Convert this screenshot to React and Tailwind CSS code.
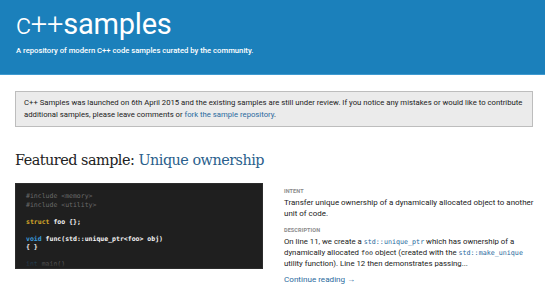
import React from "react";

const mono = { fontFamily: '"DejaVu Sans Mono", "Liberation Mono", monospace' };

export default function App() {
  return (
    <div className="w-[545px] h-[298px] overflow-hidden bg-white font-['Roboto',sans-serif] text-[#222]">
      <header className="h-[75px] bg-[#1b80bb] border-b border-[#3f9ad0] px-[16px] pt-[6px] text-white">
        <div className="flex items-baseline text-[29px] leading-[36px] tracking-[-0.2px]">
          <span className="font-light">c++</span>
          <span className="font-normal">samples</span>
        </div>
        <div className="mt-[4px] text-[7.7px] leading-[10px] font-medium">
          A repository of modern C++ code samples curated by the community.
        </div>
      </header>
      <main className="px-[15px]">
        <div className="mt-[16px] w-[518px] h-[36px] border border-[#bdbdbd] bg-[#ebebeb] px-[8px] py-[5px] text-[7.72px] leading-[12px] text-[#222]">
          C++ Samples was launched on 6th April 2015 and the existing samples are still under review. If you notice any mistakes or would like to contribute additional samples, please leave comments or{" "}
          <span className="text-[#2a6a9e]">fork the sample repository</span>.
        </div>
        <h1 className="mt-[23px] h-[20px] text-[14.4px] leading-[20px] font-['DejaVu_Serif',serif] tracking-[-0.5px] text-[#222]">
          Featured sample: <span className="text-[#2b5f8c]">Unique ownership</span>
        </h1>
        <div className="mt-[13px] flex gap-[21px]">
          <div className="relative w-[248px] h-[86px] shrink-0 overflow-hidden bg-[#1f1f1f] border border-[#2c2c2c] pl-[10px] pt-[8px] text-[6.5px] leading-[8.5px] text-[#f2f2f2]" style={mono}>
            <div className="text-[#6b6b6b]">#include &lt;memory&gt;</div>
            <div className="text-[#6b6b6b]">#include &lt;utility&gt;</div>
            <div>&nbsp;</div>
            <div className="font-bold"><span className="text-[#d6a82a]">struct</span> foo {"{};"}</div>
            <div>&nbsp;</div>
            <div className="font-bold"><span className="text-[#3a9bdc]">void</span> func(std::unique_ptr&lt;foo&gt; obj)</div>
            <div className="font-bold">{"{ }"}</div>
            <div>&nbsp;</div>
            <div><span className="text-[#3a9bdc]">int</span> main()</div>
            <div className="pointer-events-none absolute left-0 right-0 bottom-0 h-[20px] bg-gradient-to-b from-[#1f1f1f00] to-[#1f1f1f]" />
          </div>
          <div className="flex-1 min-w-0 pt-[4px]">
            <div className="text-[5.5px] leading-[8px] font-bold text-[#8a8a8a] tracking-[0.1px]">INTENT</div>
            <div className="mt-[3px] text-[7.95px] leading-[10.7px] text-[#222] whitespace-nowrap">
              Transfer unique ownership of a dynamically allocated object to another
              <br />
              unit of code.
            </div>
            <div className="mt-[7px] text-[5.5px] leading-[8px] font-bold text-[#8a8a8a] tracking-[0.1px]">DESCRIPTION</div>
            <div className="mt-[3px] text-[7.8px] leading-[10.7px] text-[#222] whitespace-nowrap">
              On line 11, we create a <span className="text-[#2a6a9e] text-[6.7px]" style={mono}>std::unique_ptr</span> which has ownership of a
              <br />
              dynamically allocated <span className="text-[6.7px]" style={mono}>foo</span> object (created with the <span className="text-[#2a6a9e] text-[6.7px]" style={mono}>std::make_unique</span>
              <br />
              utility function). Line 12 then demonstrates passing...
            </div>
            <div className="mt-[4px] text-[8.1px] leading-[11px] text-[#2a6a9e]">Continue reading →</div>
          </div>
        </div>
      </main>
    </div>
  );
}
